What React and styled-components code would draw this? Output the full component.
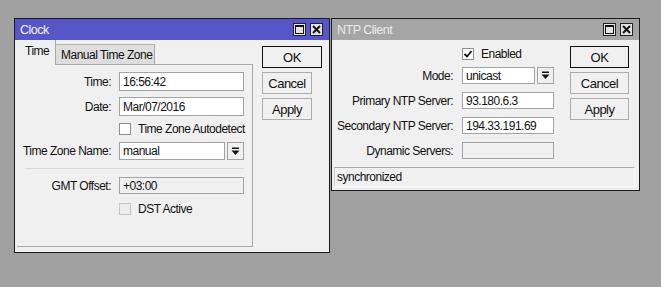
import React from "react";
import styled, { createGlobalStyle } from "styled-components";

const GlobalStyle = createGlobalStyle`
  html, body {
    margin: 0;
    background: #a1a1a1;
  }
  body {
    font-family: "Liberation Sans", Arial, sans-serif;
    font-size: 12px;
    letter-spacing: -0.5px;
    color: #111;
  }
`;

const Desktop = styled.div`
  display: flex;
  align-items: flex-start;
  gap: 1px;
  padding: 18px 0 0 14px;
  height: 269px;
`;

const Win = styled.div`
  width: ${(p) => p.$w}px;
  height: ${(p) => p.$h}px;
  box-sizing: border-box;
  border: 1px solid #1b1b1b;
  background: #f0f0f0;
  display: flex;
  flex-direction: column;
`;

const TitleBar = styled.div`
  height: 21px;
  flex: none;
  display: flex;
  align-items: center;
  padding: 0 6px 0 5px;
  background: ${(p) => (p.$active ? "#5656c8" : "#a5a5a5")};
  color: ${(p) => (p.$active ? "#f4f4ff" : "#ececec")};
  font-size: 12.5px;
`;

const Title = styled.span`
  flex: 1;
`;

const TitleButtons = styled.div`
  display: flex;
  gap: 4px;
`;

const TitleBtn = styled.div`
  width: 13px;
  height: 13px;
  box-sizing: border-box;
  border: 1px solid #222;
  background: #e4e4e4;
  display: flex;
  align-items: center;
  justify-content: center;
`;

const Body = styled.div`
  flex: 1;
  display: flex;
  flex-direction: column;
  padding: ${(p) => p.$pad};
`;

const TopRow = styled.div`
  flex: 1;
  display: flex;
  align-items: stretch;
`;

const TabArea = styled.div`
  width: 236px;
  display: flex;
  flex-direction: column;
`;

const TabRow = styled.div`
  display: flex;
  align-items: flex-end;
  height: 24px;
`;

const Tab = styled.div`
  box-sizing: border-box;
  display: flex;
  align-items: center;
  white-space: nowrap;
  position: relative;
  z-index: 1;
  ${(p) =>
    p.$active
      ? `
    width: 39px;
    height: 25px;
    margin-bottom: -1px;
    padding: 0 0 3px 8px;
    background: #f0f0f0;
    border-right: 1px solid #a8a8a8;
  `
      : `
    width: 99px;
    height: 20px;
    padding-left: 5px;
    background: #dedede;
    border-top: 1px solid #b4b4b4;
    border-right: 1px solid #a8a8a8;
  `}
`;

const Panel = styled.div`
  flex: 1;
  border-top: 1px solid #a8a8a8;
  border-right: 1px solid #a8a8a8;
  border-bottom: 1px solid #a8a8a8;
`;

const Form = styled.div`
  display: grid;
  grid-template-columns: ${(p) => p.$cols};
  column-gap: ${(p) => p.$gap}px;
  row-gap: ${(p) => p.$rowGap}px;
  padding-top: ${(p) => p.$top}px;
  align-items: center;
`;

const Label = styled.div`
  text-align: right;
  white-space: nowrap;
`;

const Field = styled.div`
  height: ${(p) => p.$h}px;
  box-sizing: border-box;
  border: 1px solid #a3a3a3;
  background: ${(p) => (p.$disabled ? "#f0f0f0" : "#fff")};
  padding-left: 3px;
  display: flex;
  align-items: center;
  white-space: nowrap;
`;

const ComboRow = styled.div`
  display: flex;
  gap: 2px;
`;

const ComboField = styled(Field)`
  flex: 1;
`;

const DropBtn = styled.div`
  width: 17px;
  height: ${(p) => p.$h}px;
  box-sizing: border-box;
  border: 1px solid #a3a3a3;
  background: #f0f0f0;
  display: flex;
  align-items: center;
  justify-content: center;
`;

const CheckRow = styled.div`
  grid-column: 2;
  height: ${(p) => p.$h}px;
  display: flex;
  align-items: center;
  gap: 7px;
  white-space: nowrap;
`;

const Box = styled.div`
  flex: none;
  width: 12px;
  height: 12px;
  box-sizing: border-box;
  border: 1px solid ${(p) => (p.$disabled ? "#c4c4c4" : "#8e8e8e")};
  background: ${(p) => (p.$disabled ? "#ececec" : "#fff")};
  display: flex;
  align-items: center;
  justify-content: center;
`;

const Separator = styled.div`
  grid-column: 1 / 3;
  height: 5px;
  margin-left: 8px;
  background: linear-gradient(#f0f0f0 2px, #d8d8d8 2px, #d8d8d8 3px, #f0f0f0 3px);
`;

const Buttons = styled.div`
  display: flex;
  flex-direction: column;
  gap: 4px;
  margin: 6px 0 0 ${(p) => p.$left}px;
`;

const Button = styled.div`
  width: ${(p) => p.$w}px;
  height: 22px;
  box-sizing: border-box;
  border: 1px solid ${(p) => (p.$default ? "#111" : "#adadad")};
  background: #f0f0f0;
  display: flex;
  align-items: center;
  justify-content: center;
  font-size: 13px;
`;

const StatusBar = styled.div`
  height: 20px;
  margin-top: 8px;
  box-sizing: border-box;
  border-top: 1px solid #a8a8a8;
  border-left: 1px solid #d0d0d0;
  border-bottom: 1px solid #fff;
  border-right: 1px solid #fff;
  padding-left: 2px;
  display: flex;
  align-items: center;
`;

const MaxIcon = () => (
  <svg width="9" height="9" viewBox="0 0 9 9">
    <rect x="0.5" y="0.5" width="8" height="8" fill="none" stroke="#111" />
    <rect x="0" y="0" width="9" height="2" fill="#111" />
  </svg>
);

const CloseIcon = () => (
  <svg width="9" height="9" viewBox="0 0 9 9">
    <path d="M1 1 L8 8 M8 1 L1 8" stroke="#111" strokeWidth="2" />
  </svg>
);

const DropIcon = () => (
  <svg width="9" height="9" viewBox="0 0 9 9">
    <rect x="1" y="0.5" width="7" height="1.5" fill="#111" />
    <path d="M0.5 3.5 L8.5 3.5 L4.5 8 Z" fill="#111" />
  </svg>
);

const CheckIcon = () => (
  <svg width="10" height="10" viewBox="0 0 10 10">
    <path d="M1.5 5 L4 7.5 L8.5 2" fill="none" stroke="#111" strokeWidth="1.8" />
  </svg>
);

const WindowTitle = ({ title, active }) => (
  <TitleBar $active={active}>
    <Title>{title}</Title>
    <TitleButtons>
      <TitleBtn>
        <MaxIcon />
      </TitleBtn>
      <TitleBtn>
        <CloseIcon />
      </TitleBtn>
    </TitleButtons>
  </TitleBar>
);

const Check = ({ label, checked, disabled, h }) => (
  <CheckRow $h={h}>
    <Box $disabled={disabled}>{checked && <CheckIcon />}</Box>
    {label}
  </CheckRow>
);

const ClockWindow = () => (
  <Win $w={316} $h={235}>
    <WindowTitle title="Clock" active />
    <Body $pad="0 0 5px 2px">
      <TopRow>
        <TabArea>
          <TabRow>
            <Tab $active>Time</Tab>
            <Tab>Manual Time Zone</Tab>
          </TabRow>
          <Panel>
            <Form $cols="94px 125px" $gap={8} $rowGap={6} $top={7}>
              <Label>Time:</Label>
              <Field $h={19}>16:56:42</Field>
              <Label>Date:</Label>
              <Field $h={19}>Mar/07/2016</Field>
              <Check label="Time Zone Autodetect" h={14} />
              <Label>Time Zone Name:</Label>
              <ComboRow>
                <ComboField $h={18}>manual</ComboField>
                <DropBtn $h={18}>
                  <DropIcon />
                </DropBtn>
              </ComboRow>
              <Separator />
              <Label>GMT Offset:</Label>
              <Field $h={17} $disabled>
                +03:00
              </Field>
              <Check label="DST Active" disabled h={17} />
            </Form>
          </Panel>
        </TabArea>
        <Buttons $left={9}>
          <Button $w={60} $default>
            OK
          </Button>
          <Button $w={50}>Cancel</Button>
          <Button $w={50}>Apply</Button>
        </Buttons>
      </TopRow>
    </Body>
  </Win>
);

const NtpWindow = () => (
  <Win $w={309} $h={173}>
    <WindowTitle title="NTP Client" />
    <Body $pad="0 4px 3px 2px">
      <TopRow>
        <Form $cols="119px 92px" $gap={9} $rowGap={8} $top={8}>
          <Check label="Enabled" checked h={11} />
          <Label>Mode:</Label>
          <ComboRow>
            <ComboField $h={17}>unicast</ComboField>
            <DropBtn $h={17}>
              <DropIcon />
            </DropBtn>
          </ComboRow>
          <Label>Primary NTP Server:</Label>
          <Field $h={17}>93.180.6.3</Field>
          <Label>Secondary NTP Server:</Label>
          <Field $h={17}>194.33.191.69</Field>
          <Label>Dynamic Servers:</Label>
          <Field $h={17} $disabled />
        </Form>
        <Buttons $left={16}>
          <Button $w={59} $default>
            OK
          </Button>
          <Button $w={59}>Cancel</Button>
          <Button $w={59}>Apply</Button>
        </Buttons>
      </TopRow>
      <StatusBar>synchronized</StatusBar>
    </Body>
  </Win>
);

export default function App() {
  return (
    <>
      <GlobalStyle />
      <Desktop>
        <ClockWindow />
        <NtpWindow />
      </Desktop>
    </>
  );
}
